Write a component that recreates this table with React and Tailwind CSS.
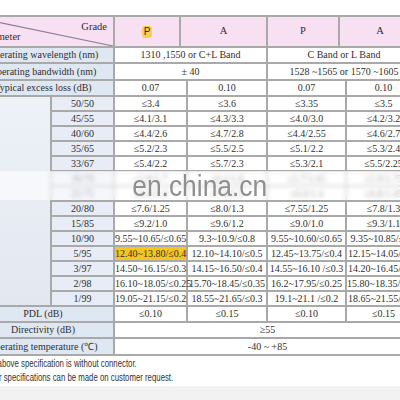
import React from "react";

const cell = "border-2 border-[#a9a9a9] text-center align-middle p-0 whitespace-nowrap";
const label = cell + " bg-[#dfe7f3]";
const ratioCell = cell + " bg-[#e7ecf6]";
const value = cell + " bg-white";

const ratios = [
  ["50/50", "≤3.4", "≤3.6", "≤3.35", "≤3.5"],
  ["45/55", "≤4.1/3.1", "≤4.3/3.3", "≤4.0/3.0", "≤4.2/3.2"],
  ["40/60", "≤4.4/2.6", "≤4.7/2.8", "≤4.4/2.55", "≤4.6/2.7"],
  ["35/65", "≤5.2/2.3", "≤5.5/2.5", "≤5.1/2.2", "≤5.3/2.4"],
  ["33/67", "≤5.4/2.2", "≤5.7/2.3", "≤5.3/2.1", "≤5.5/2.25"],
  ["30/70", "≤5.8/1.7", "≤6.1/1.8", "≤5.7/1.65", "≤5.9/1.75"],
  ["25/75", "≤6.6/1.4", "≤7.0/1.5", "≤6.6/1.4", "≤6.8/1.45"],
  ["20/80", "≤7.6/1.25", "≤8.0/1.3", "≤7.55/1.25", "≤7.8/1.3"],
  ["15/85", "≤9.2/1.0", "≤9.6/1.2", "≤9.0/1.0", "≤9.3/1.1"],
  ["10/90", "9.55~10.65/≤0.65", "9.3~10.9/≤0.8", "9.55~10.60/≤0.65", "9.35~10.85/≤0.8"],
  ["5/95", "12.40~13.80/≤0.4", "12.10~14.10/≤0.5", "12.45~13.75/≤0.4", "12.15~14.05/≤0.5"],
  ["3/97", "14.50~16.15/≤0.3", "14.15~16.50/≤0.4", "14.55~16.10 /≤0.3", "14.20~16.45/≤0.4"],
  ["2/98", "16.10~18.05/≤0.25", "15.70~18.45/≤0.35", "16.2~17.95/≤0.25", "15.80~18.35/≤0.35"],
  ["1/99", "19.05~21.15/≤0.2", "18.55~21.65/≤0.3", "19.1~21.1 /≤0.2", "18.65~21.55/≤0.3"],
];

export default function App() {
  return (
    <div className="w-[400px] h-[400px] overflow-hidden bg-white flex flex-col relative text-[#2f2f2f]">
      <div className="pt-[15px] -ml-[29px] font-['Liberation_Serif',serif] text-[10px] leading-none">
        {/* header */}
        <table className="border-collapse table-fixed w-[449px]">
          <colgroup>
            <col className="w-[142px]" />
            <col className="w-[66px]" />
            <col className="w-[87px]" />
            <col className="w-[72px]" />
            <col className="w-[82px]" />
          </colgroup>
          <tbody>
            <tr className="h-[31px] bg-[#f8e0f3] text-[10.5px]">
              <td className={cell + " relative"}>
                <svg className="absolute inset-0 w-full h-full" viewBox="0 0 138 27" preserveAspectRatio="none">
                  <line x1="0" y1="0" x2="138" y2="27" stroke="#8a7f95" strokeWidth="1" />
                </svg>
                <span className="absolute right-[6px] top-[5px]">Grade</span>
                <span className="absolute left-[5px] bottom-[4px]">Parameter</span>
              </td>
              <td className={cell}>
                <span className="inline-block bg-[#f6cf55] rounded-[3px] px-[2px] py-[1px] font-['Liberation_Sans',sans-serif] text-[10px]">P</span>
              </td>
              <td className={cell}>A</td>
              <td className={cell}>P</td>
              <td className={cell}>A</td>
            </tr>
          </tbody>
        </table>
        {/* body */}
        <table className="border-collapse table-fixed w-[449px] -mt-[2px]">
          <colgroup>
            <col className="w-[79px]" />
            <col className="w-[63px]" />
            <col className="w-[73px]" />
            <col className="w-[80px]" />
            <col className="w-[79px]" />
            <col className="w-[75px]" />
          </colgroup>
          <tbody>
            <tr className="h-[16px]">
              <td colSpan={2} className={label}>Operating wavelength (nm)</td>
              <td colSpan={2} className={value}>1310 ,1550 or C+L Band</td>
              <td colSpan={2} className={value}>C Band or L Band</td>
            </tr>
            <tr className="h-[17px]">
              <td colSpan={2} className={label}>Operating bandwidth (nm)</td>
              <td colSpan={2} className={value}>± 40</td>
              <td colSpan={2} className={value}>1528 ~1565 or 1570 ~1605</td>
            </tr>
            <tr className="h-[16px]">
              <td colSpan={2} className={label}>Typical excess loss (dB)</td>
              <td className={value}>0.07</td>
              <td className={value}>0.10</td>
              <td className={value}>0.07</td>
              <td className={value}>0.10</td>
            </tr>
            {ratios.map((r, i) => (
              <tr key={r[0]} className="h-[15px]">
                {i === 0 && (
                  <td rowSpan={ratios.length} className={cell + " bg-gradient-to-b from-[#eef2f7] to-[#e2e8f1]"}></td>
                )}
                <td className={ratioCell}>{r[0]}</td>
                <td className={r[0] === "5/95" ? cell + " bg-[#f7c520]" : value}>{r[1]}</td>
                <td className={value}>{r[2]}</td>
                <td className={value}>{r[3]}</td>
                <td className={value}>{r[4]}</td>
              </tr>
            ))}
            <tr className="h-[16px]">
              <td colSpan={2} className={label}>PDL (dB)</td>
              <td className={value}>≤0.10</td>
              <td className={value}>≤0.15</td>
              <td className={value}>≤0.10</td>
              <td className={value}>≤0.15</td>
            </tr>
            <tr className="h-[16px]">
              <td colSpan={2} className={label}>Directivity (dB)</td>
              <td colSpan={4} className={value}>≥55</td>
            </tr>
            <tr className="h-[17px]">
              <td colSpan={2} className={label}>Operating temperature (℃)</td>
              <td colSpan={4} className={value}>-40 ~ +85</td>
            </tr>
          </tbody>
        </table>
      </div>

      {/* notes */}
      <div className="-ml-[18px] pt-[1px] font-['Liberation_Sans',sans-serif] text-[10px] leading-[14px] text-[#333] origin-left scale-x-[0.78] whitespace-nowrap">
        <p>The above specification is without connector.</p>
        <p>Other specifications can be made on customer request.</p>
      </div>
      <div className="flex-1 mt-[1px] bg-[#f2f2f2]"></div>

      {/* watermark */}
      <div className="absolute left-0 right-0 top-[171px] h-[29px] bg-white/60 backdrop-blur-[2px] flex items-center justify-center">
        <span className="font-['Liberation_Sans',sans-serif] text-[30px] leading-none text-[#8f8f8f] scale-x-[0.88]">en.china.cn</span>
      </div>
    </div>
  );
}
